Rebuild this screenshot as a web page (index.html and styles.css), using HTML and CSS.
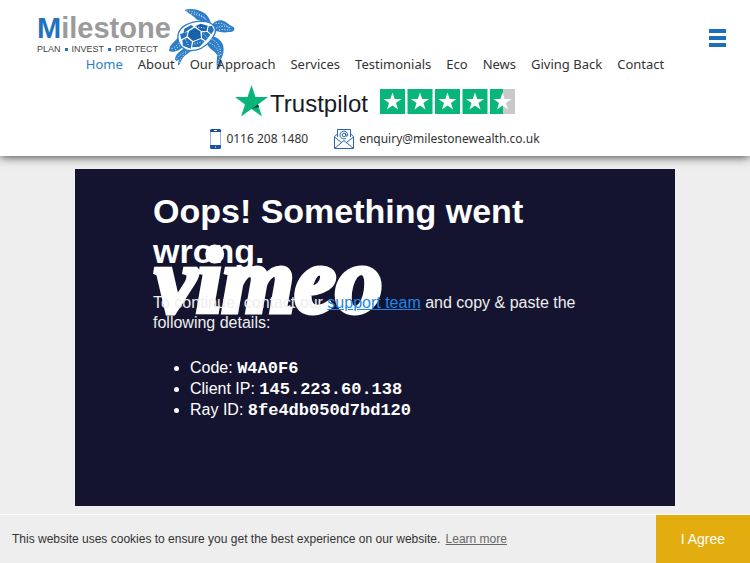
FILE: index.html
```html
<!DOCTYPE html>
<html lang="en">
<head>
<meta charset="utf-8">
<meta name="viewport" content="width=device-width, initial-scale=1">
<title>Milestone</title>
<link rel="stylesheet" href="styles.css">
</head>
<body>
<header class="site-header">
  <div class="brand-row">
    <a class="brand" href="#">
      <span class="brand-name"><b>M</b>ilestone</span>
      <span class="tagline"><span>PLAN</span><i></i><span>INVEST</span><i></i><span>PROTECT</span></span>
      <svg class="turtle" viewBox="0 0 255 195" aria-hidden="true">
        <g fill="#2f7fc8">
          <path d="M88 15C104 9 128 12 144 22C157 29 164 40 167 53C151 48 136 50 124 43C117 33 104 27 88 15Z"/>
          <path d="M172 63C174 50 190 43 204 47C216 51 217 56 236 66C242 74 235 82 222 81C206 84 196 81 184 79C177 76 171 70 172 63Z"/>
          <path d="M164 95C183 93 196 104 204 119C208 134 206 149 198 163C202 176 196 190 188 194C183 181 185 166 187 150C180 139 165 134 156 118Z"/>
          <path d="M70 96C62 108 52 112 45 125L42 138C56 145 76 136 86 123L94 106Z"/>
          <path d="M91 130C74 136 62 149 60 163C64 171 69 167 72 162C70 173 66 183 73 179C78 168 82 159 89 152C97 147 102 142 110 137Z"/>
        </g>
        <path fill="#fff" stroke="#2f7fc8" stroke-width="4" d="M70 86C76 64 104 50 134 49C154 48 171 53 179 66C186 79 176 95 167 106C152 125 130 138 102 137C78 134 64 107 70 86Z"/>
        <g fill="#2272bd">
          <path d="M102 79L119 68L136 79L138 99L114 108L98 94Z" fill="#1761aa"/>
          <path d="M120 64L137 56L158 62L154 79L138 77Z" fill="#1761aa"/>
          <path d="M141 82L157 81L166 90L152 107L141 99Z"/>
          <path d="M115 111L137 102L149 109L134 125L111 127Z"/>
          <path d="M96 98L111 110L107 131L84 122L82 105Z"/>
          <path d="M85 86L104 73L116 65L108 60L88 71Z"/>
          <path d="M161 64L171 63L177 75L169 88L158 78Z"/>
          <path d="M75 87L79 103L94 95L98 81Z"/>
        </g>
        <g fill="none" stroke="#fff" stroke-width="3" stroke-dasharray="3 5">
          <path d="M94 18Q126 16 157 47M108 26Q134 29 153 42"/>
          <path d="M182 56Q205 49 225 73M184 69Q205 58 230 70M192 75Q210 71 225 77"/>
          <path d="M169 102Q196 113 198 151M164 114Q191 125 193 155M195 158Q187 174 190 189"/>
          <path d="M50 131Q70 122 78 104M60 135L82 115M65 161Q78 145 98 138M73 173Q76 158 92 145"/>
          <path d="M122 65L152 70M118 117L142 110M91 103L102 124M145 86L157 99"/>
        </g>
      </svg>
    </a>
    <button class="menu" type="button" aria-label="Menu"><span></span><span></span><span></span></button>
  </div>
  <nav class="nav">
    <a class="active" href="#">Home</a><a href="#">About</a><a href="#">Our Approach</a><a href="#">Services</a><a href="#">Testimonials</a><a href="#">Eco</a><a href="#">News</a><a href="#">Giving Back</a><a href="#">Contact</a>
  </nav>
  <a class="trust" href="#">
    <svg class="trust-star" viewBox="0 0 33 32" aria-hidden="true"><path fill="#08b67a" d="M16.500 0L20.500 12H33L23 19.500L27 31.500L16.500 24L6 31.500L10 19.500L0 12H12.500Z"/><path fill="#093f35" d="M16.500 24L23 19.500L24 22Z"/></svg>
    <span class="trust-name">Trustpilot</span>
    <svg class="rating" viewBox="0 0 135 25" aria-hidden="true">
      <defs><path id="star" fill="#fff" d="M12.500 3.500L14.700 10H21.500L16 14L18 20.500L12.500 16.500L7 20.500L9 14L3.500 10H10.300Z"/></defs>
      <path fill="#08b67a" d="M0 0h25v25H0zM27.500 0h25v25h-25zM55 0h25v25H55zM82.500 0h25v25h-25zM110 0h13v25h-13z"/>
      <path fill="#c9c9c9" d="M123 0h12v25h-12z"/>
      <use href="#star"/><use href="#star" x="27.500"/><use href="#star" x="55"/><use href="#star" x="82.500"/><use href="#star" x="110"/>
    </svg>
  </a>
  <div class="contacts">
    <a href="#">
      <svg class="phone" viewBox="0 0 11 20" aria-hidden="true"><rect x=".5" y=".5" width="10" height="19" rx="1.500" fill="#fff" stroke="#98b4da"/><path fill="#1854a3" d="M0 3V1.500Q0 0 1.500 0h8Q11 0 11 1.500V3zM0 16h11v2.500Q11 20 9.500 20h-8Q0 20 0 18.500z"/><path stroke="#fff" d="M4 1.500h3M5 18h1"/></svg>
      0116 208 1480</a>
    <a href="#">
      <svg class="mail" viewBox="0 0 20 20" fill="none" stroke="#2866b0" aria-hidden="true"><path d="M3.500 8V.500h13V8M3.500 5L.500 7.500v12h19v-12l-3-2.500M.500 8l7 5.500M19.500 8l-7 5.500M.500 19.500L10 11.500l9.500 8"/><circle cx="10" cy="6" r="1.800"/><path d="M11.800 4.200v2.500q1.500 1.500 2-.500a3.900 3.900 0 1 0-2 3.200"/></svg>
      enquiry@milestonewealth.co.uk</a>
  </div>
</header>
<main class="content">
  <section class="player">
    <div class="vimeo" aria-hidden="true">vimeo</div>
    <div class="message">
      <h1>Oops! Something went wrong.</h1>
      <p>To continue, contact our <a href="#">support team</a> and copy &amp; paste the following details:</p>
      <ul>
        <li>Code: <code>W4A0F6</code></li>
        <li>Client IP: <code>145.223.60.138</code></li>
        <li>Ray ID: <code>8fe4db050d7bd120</code></li>
      </ul>
    </div>
  </section>
</main>
<aside class="cookies">
  <p>This website uses cookies to ensure you get the best experience on our website. <a href="#">Learn more</a></p>
  <button type="button">I Agree</button>
</aside>
</body>
</html>
```
FILE: styles.css
```css
* { box-sizing: border-box; }
body {
  margin: 0;
  min-height: 100vh;
  display: flex;
  flex-direction: column;
  background: #eee;
  color: #333;
  font-family: "Noto Sans", "Open Sans", sans-serif;
}
a { color: inherit; text-decoration: none; }
svg { display: block; flex: none; }

.site-header {
  position: relative;
  background: #fff;
  box-shadow: 0 0 10px #222;
  padding-bottom: 6px;
}
.brand-row {
  display: flex;
  justify-content: space-between;
  align-items: flex-start;
  padding: 12px 24px 0 37px;
}
.brand {
  position: relative;
  display: flex;
  flex-direction: column;
  font-family: "Liberation Sans", sans-serif;
}
.brand-name {
  font-size: 29px;
  line-height: 32px;
  font-weight: bold;
  color: #9b9b9b;
}
.brand-name b { color: #2272bd; }
.tagline {
  display: flex;
  align-items: center;
  gap: 4px;
  font-size: 9px;
  line-height: 10px;
  color: #444;
}
.tagline i {
  width: 3px;
  height: 3px;
  background: #2272bd;
}
.turtle {
  position: absolute;
  left: 118px;
  top: -7px;
  width: 85px;
  height: 65px;
}
.menu {
  display: flex;
  flex-direction: column;
  gap: 3px;
  margin-top: 17px;
  padding: 0;
  border: 0;
  background: none;
}
.menu span {
  width: 17px;
  height: 4px;
  background: #1b6dbd;
}
.nav {
  position: relative;
  display: flex;
  flex-wrap: wrap;
  justify-content: center;
  gap: 0 15px;
  font-size: 13px;
  line-height: 20px;
}
.nav .active { color: #2a7fc9; }
.trust {
  display: flex;
  justify-content: center;
  align-items: center;
  margin-top: 10px;
}
.trust-star { width: 33px; height: 32px; }
.trust-name {
  margin: 6px 12px 0 2px;
  font-family: "Liberation Sans", sans-serif;
  font-size: 24px;
  line-height: 28px;
  color: #191927;
}
.rating { width: 135px; height: 25px; }
.contacts {
  display: flex;
  justify-content: center;
  gap: 26px;
  margin-top: 10px;
  font-size: 12px;
  line-height: 22px;
}
.contacts a {
  display: flex;
  align-items: center;
  gap: 5px;
}
.phone { width: 11px; height: 20px; }
.mail { width: 20px; height: 20px; }

.content {
  flex: 1;
  padding: 13px 10% 8px;
}
.player {
  position: relative;
  display: flow-root;
  padding: 22px 13% 85px;
  background: #141430;
  color: #fff;
  font-family: "Liberation Sans", sans-serif;
}
.vimeo {
  position: absolute;
  left: 13%;
  top: 62px;
  padding-left: 2px;
  font-family: "Liberation Serif", serif;
  font-size: 93px;
  line-height: 100px;
  font-weight: bold;
  font-style: italic;
  -webkit-text-stroke: 5px #fff;
}
.message {
  position: relative;
  font-size: 16px;
  line-height: 20px;
}
.message h1 {
  margin: 0 0 22px;
  font-size: 34px;
  line-height: 40px;
}
.message p { margin: 0 0 25px; color: #eee; }
.message p a { color: #1e86e5; text-decoration: underline; }
.message ul { margin: 0; padding-left: 37px; }
.message code {
  font-family: "Liberation Mono", monospace;
  font-size: 17px;
  font-weight: bold;
}

.cookies {
  display: flex;
  justify-content: space-between;
  border-top: 1px solid #fff;
  background: #eee;
  font-family: "Liberation Sans", sans-serif;
  font-size: 12px;
}
.cookies p { margin: 0; padding: 0 12px; line-height: 48px; }
.cookies p a { margin-left: 2px; color: #666; text-decoration: underline; }
.cookies button {
  padding: 0 25px;
  border: 0;
  background: #e4ad0f;
  color: #fff;
  font: 14px "Liberation Sans", sans-serif;
}
```
